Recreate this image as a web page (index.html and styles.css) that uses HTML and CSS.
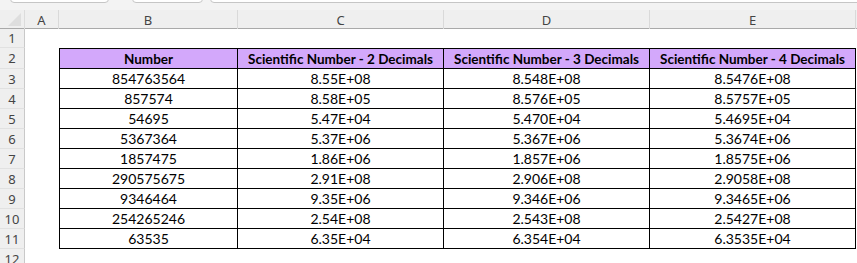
FILE: index.html
```html
<!DOCTYPE html>
<html lang="en">
<head>
  <meta charset="UTF-8" />
  <title>Scientific Number Formats</title>
  <link rel="stylesheet" href="styles.css">
</head>
<body>

  <!-- formula bar leftovers -->
  <div class="topbar">
    <span class="tb-box tb-name"></span>
    <span class="tb-box tb-fx"></span>
    <span class="tb-box tb-formula"></span>
  </div>

  <div class="sheet">
    <div class="row col-heads">
      <div class="corner"><span class="corner-tri"></span></div>
      <div class="ch">A</div>
      <div class="ch">B</div>
      <div class="ch">C</div>
      <div class="ch">D</div>
      <div class="ch">E</div>
      <div class="ch last"></div>
    </div>

    <div class="row r1">
      <div class="rh">1</div>
      <div></div><div></div><div></div><div></div><div></div><div></div>
    </div>

    <div class="row r-head">
      <div class="rh">2</div>
      <div></div>
      <div class="cell th first">Number</div>
      <div class="cell th">Scientific Number - 2 Decimals</div>
      <div class="cell th">Scientific Number - 3 Decimals</div>
      <div class="cell th">Scientific Number - 4 Decimals</div>
      <div></div>
    </div>

    <div id="dataRows"></div>

    <div class="row r12">
      <div class="rh">12</div>
      <div></div><div></div><div></div><div></div><div></div><div></div>
    </div>
  </div>

  <script>
    const rows = [
      ['854763564', '8.55E+08', '8.548E+08', '8.5476E+08'],
      ['857574', '8.58E+05', '8.576E+05', '8.5757E+05'],
      ['54695', '5.47E+04', '5.470E+04', '5.4695E+04'],
      ['5367364', '5.37E+06', '5.367E+06', '5.3674E+06'],
      ['1857475', '1.86E+06', '1.857E+06', '1.8575E+06'],
      ['290575675', '2.91E+08', '2.906E+08', '2.9058E+08'],
      ['9346464', '9.35E+06', '9.346E+06', '9.3465E+06'],
      ['254265246', '2.54E+08', '2.543E+08', '2.5427E+08'],
      ['63535', '6.35E+04', '6.354E+04', '6.3535E+04'],
    ];

    const dataRows = document.getElementById('dataRows');

    rows.forEach((r, i) => {
      const row = document.createElement('div');
      row.className = 'row r-data';
      let html = '<div class="rh">' + (i + 3) + '</div><div></div>';
      r.forEach((v, j) => {
        html += '<div class="cell' + (j === 0 ? ' first' : '') + '">' + v + '</div>';
      });
      html += '<div></div>';
      row.innerHTML = html;
      dataRows.appendChild(row);
    });
  </script>

</body>
</html>
```

FILE: styles.css
```css
body {
  margin: 0;
  background-color: #fff;
  font-family: 'Lato', 'Liberation Sans', sans-serif;
  color: #000;
  overflow: hidden;
}

/* formula bar strip at the very top */
.topbar {
  height: 10px;
  background-color: #f3f3f3;
  position: relative;
}

.tb-box {
  position: absolute;
  top: -6px;
  height: 7px;
  background-color: #fff;
  border: 1px solid #c6c6c6;
  border-radius: 4px;
}

.tb-name { left: 10px; width: 97px; }
.tb-fx { left: 132px; width: 69px; }
.tb-formula { left: 210px; width: 660px; }

.row {
  display: grid;
  grid-template-columns: 25px 34px 179px 206px 206px 206px 1fr;
}

/* column headers */
.col-heads {
  height: 18px;
  background-color: #efefef;
  border-bottom: 1px solid #a9a9a9;
}

.corner {
  position: relative;
  border-right: 1px solid #dcdcdc;
}

.corner-tri {
  position: absolute;
  right: 3px;
  bottom: 3px;
  width: 0;
  height: 0;
  border-left: 13px solid transparent;
  border-bottom: 13px solid #dedede;
}

.ch {
  display: flex;
  align-items: center;
  justify-content: center;
  font-family: 'Noto Sans', 'Open Sans', sans-serif;
  font-size: 13px;
  color: #444;
  border-right: 1px solid #d9d9d9;
  padding-top: 1px;
}

.ch.last {
  border-right: none;
}

/* row headers */
.rh {
  display: flex;
  align-items: center;
  justify-content: center;
  background-color: #efefef;
  border-right: 1px solid #c9c9c9;
  border-bottom: 1px solid #e1e1e1;
  font-family: 'Noto Sans', 'Open Sans', sans-serif;
  font-size: 13px;
  color: #444;
}

.r1 { height: 19px; }
.r-head { height: 21px; }
.r-data { height: 20px; }
.r12 { height: 20px; }

.r1 .rh { height: 18px; }

.cell {
  display: flex;
  align-items: center;
  justify-content: center;
  font-size: 14px;
  border-right: 1px solid #000;
  border-bottom: 1px solid #000;
  white-space: nowrap;
}

.cell.first {
  border-left: 1px solid #000;
}

.r-head .cell {
  border-top: 1px solid #000;
}

.th {
  background-color: #d3a8fb;
  font-weight: 700;
  font-size: 13.5px;
}

.r-data .rh,
.r-head .rh {
  border-bottom: 1px solid #e1e1e1;
}
```
